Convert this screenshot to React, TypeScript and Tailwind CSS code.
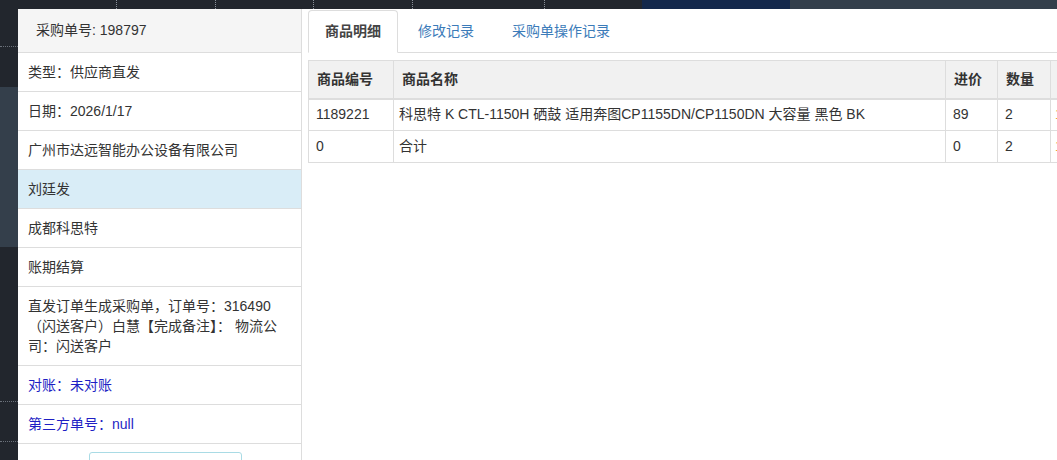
import React from "react";

// 采购单详情 — 左侧信息列表 + 右侧商品明细表

type Item = { id: string; name: string; price: string; qty: string; amount: string; extra: string };

const items: Item[] = [
  {
    id: "1189221",
    name: "科思特 K CTL-1150H 硒鼓 适用奔图CP1155DN/CP1150DN 大容量 黑色 BK",
    price: "89",
    qty: "2",
    amount: "178",
    extra: "",
  },
  { id: "0", name: "合计", price: "0", qty: "2", amount: "178", extra: "" },
];

const font = "font-['Liberation_Sans','Noto_Sans_CJK_SC',sans-serif]";

function TopStrip() {
  // 背后页面露出来的深色条
  return (
    <div className="flex h-[9px] shrink-0 bg-[#22262d]">
      <div className="w-[117px] border-r border-dotted border-[#8a9099]" />
      <div className="w-[99px] border-r border-dotted border-[#8a9099]" />
      <div className="w-[98px] border-r border-dotted border-[#8a9099]" />
      <div className="w-[99px] border-r border-dotted border-[#8a9099]" />
      <div className="w-[132px] border-r border-dotted border-[#8a9099]" />
      <div className="w-[97px]" />
      <div className="w-[148px] bg-[#13284b]" />
      <div className="flex-1 bg-[#343f4b]" />
    </div>
  );
}

function LeftStrip() {
  return (
    <div className="flex w-[18px] shrink-0 flex-col">
      <div className="h-[38px] shrink-0 border-b border-dotted border-[#6b717a] bg-[#22262d]" />
      <div className="h-[40px] shrink-0 bg-[#22262d]" />
      <div className="h-[160px] shrink-0 bg-[#343f4b]" />
      <div className="h-[155px] shrink-0 border-b border-dotted border-[#6b717a] bg-[#22262d]" />
      <div className="h-[40px] shrink-0 border-b border-dotted border-[#6b717a] bg-[#22262d]" />
      <div className="flex-1 bg-[#22262d]" />
    </div>
  );
}

function InfoRow({ children, tone }: { children: React.ReactNode; tone?: "info" | "link" }) {
  return (
    <div
      className={`shrink-0 border-b border-[#dddddd] py-[9px] pl-[10px] pr-[10px] leading-[20px] ${
        tone === "info" ? "bg-[#d9edf7]" : ""
      } ${tone === "link" ? "text-[#1f1fc4]" : "text-[#333333]"}`}
    >
      {children}
    </div>
  );
}

function LeftPanel() {
  return (
    <div className="flex w-[284px] shrink-0 flex-col overflow-hidden border-r border-[#dddddd] bg-white text-[14px]">
      <div className="flex h-[44px] shrink-0 items-center border-b border-[#dddddd] bg-[#f5f5f5] pl-[18px] text-[#333333]">
        采购单号: 198797
      </div>
      <InfoRow>类型：供应商直发</InfoRow>
      <InfoRow>日期：2026/1/17</InfoRow>
      <InfoRow>广州市达远智能办公设备有限公司</InfoRow>
      <InfoRow tone="info">刘廷发</InfoRow>
      <InfoRow>成都科思特</InfoRow>
      <InfoRow>账期结算</InfoRow>
      <InfoRow>直发订单生成采购单，订单号：316490（闪送客户）白慧【完成备注】： 物流公司：闪送客户</InfoRow>
      <InfoRow tone="link">对账：未对账</InfoRow>
      <InfoRow tone="link">第三方单号：null</InfoRow>
      <div className="flex shrink-0 justify-center pt-[8px] pl-[12px]">
        <button
          type="button"
          className="h-[30px] w-[153px] rounded-[3px] border border-[#a9dbe5] text-[13px] text-[#5bb5c9]"
        >
          确认收货（仓库已收到货）
        </button>
      </div>
    </div>
  );
}

function Tabs() {
  const tabs = ["商品明细", "修改记录", "采购单操作记录"];
  return (
    <div className="flex h-[43px] items-end border-b border-[#dddddd] text-[14px]">
      {tabs.map((t, i) => (
        <div
          key={t}
          className={`-mb-px mr-[2px] flex h-[43px] items-center rounded-t-[4px] border px-[16px] ${
            i === 0
              ? "border-[#dddddd] border-b-white bg-white font-semibold text-[#444444]"
              : "border-transparent px-[17px] text-[#3b7bb9]"
          }`}
        >
          {t}
        </div>
      ))}
    </div>
  );
}

function ItemTable() {
  const cols = ["w-[85px]", "w-[552px]", "w-[52px]", "w-[53px]", "w-[80px]", "w-[80px]"];
  const head = ["商品编号", "商品名称", "进价", "数量", "金额", "备注"];
  return (
    <table className="mt-[7px] w-[902px] table-fixed border-collapse text-[14px] text-[#333333]">
      <colgroup>
        {cols.map((c, i) => (
          <col key={i} className={c} />
        ))}
      </colgroup>
      <thead>
        <tr className="h-[38px] bg-[#f1f1f1]">
          {head.map((h, i) => (
            <th
              key={h}
              className={`border border-b-2 border-[#dddddd] text-left font-bold whitespace-nowrap ${
                i === 4 ? "px-[14px]" : "px-[8px]"
              }`}
            >
              {h}
            </th>
          ))}
        </tr>
      </thead>
      <tbody>
        {items.map((it, i) => (
          <tr key={i} className="h-[32px]">
            <td className="border border-[#dddddd] px-[7px]">{it.id}</td>
            <td className="border border-[#dddddd] px-[5px] whitespace-nowrap">{it.name}</td>
            <td className="border border-[#dddddd] px-[7px]">{it.price}</td>
            <td className="border border-[#dddddd] px-[7px]">{it.qty}</td>
            <td className="border border-[#dddddd] px-[4px] text-[#e8a23a]">{it.amount}</td>
            <td className="border border-[#dddddd] px-[7px]">{it.extra}</td>
          </tr>
        ))}
      </tbody>
    </table>
  );
}

export default function App() {
  return (
    <div className={`flex h-[460px] w-[1057px] flex-col overflow-hidden bg-[#22262d] ${font}`}>
      <TopStrip />
      <div className="flex min-h-0 flex-1">
        <LeftStrip />
        <div className="flex min-w-0 flex-1 bg-white">
          <LeftPanel />
          <div className="min-w-0 flex-1 overflow-hidden pt-[1px] pl-[6px]">
            <Tabs />
            <ItemTable />
          </div>
        </div>
      </div>
    </div>
  );
}
